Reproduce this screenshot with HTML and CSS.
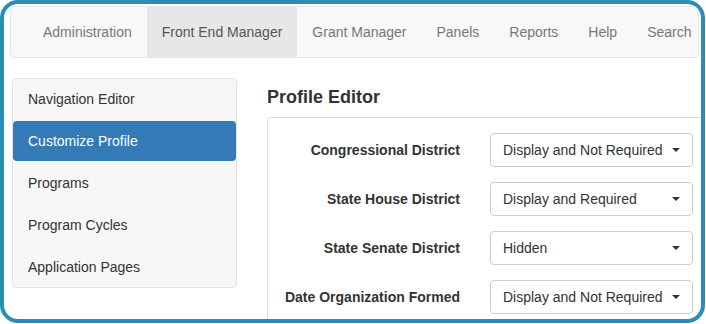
FILE: index.html
```html
<!DOCTYPE html>
<html lang="en">
  <head>
    <meta charset="UTF-8" />
    <meta name="viewport" content="width=device-width, initial-scale=1.0" />
    <title>Profile Editor</title>
    <link rel="stylesheet" href="styles.css">
  </head>
  <body>
    <div class="frame">
      <nav class="navbar">
        <ul class="nav-links">
          <li><a href="#">Administration</a></li>
          <li class="active"><a href="#">Front End Manager</a></li>
          <li><a href="#">Grant Manager</a></li>
          <li><a href="#">Panels</a></li>
          <li><a href="#">Reports</a></li>
          <li><a href="#">Help</a></li>
          <li><a href="#">Search</a></li>
        </ul>
      </nav>

      <div class="layout">
        <aside class="sidebar">
          <ul class="pills">
            <li><a href="#">Navigation Editor</a></li>
            <li class="active"><a href="#">Customize Profile</a></li>
            <li><a href="#">Programs</a></li>
            <li><a href="#">Program Cycles</a></li>
            <li><a href="#">Application Pages</a></li>
          </ul>
        </aside>

        <main class="main">
          <h4 class="page-title">Profile Editor</h4>
          <div class="panel">
            <div class="form-grid">
              <label>Congressional District</label>
              <div class="dropdown"><span>Display and Not Required</span><span class="caret"></span></div>

              <label>State House District</label>
              <div class="dropdown"><span>Display and Required</span><span class="caret"></span></div>

              <label>State Senate District</label>
              <div class="dropdown"><span>Hidden</span><span class="caret"></span></div>

              <label>Date Organization Formed</label>
              <div class="dropdown"><span>Display and Not Required</span><span class="caret"></span></div>
            </div>
          </div>
        </main>
      </div>
    </div>
  </body>
</html>
```

FILE: styles.css
```css
body {
  margin: 0;
  background-color: #fff;
  font-family: "Liberation Sans", Arial, sans-serif;
  font-size: 14px;
  color: #333;
}

.frame {
  width: 705px;
  height: 323px;
  box-sizing: border-box;
  border: 4px solid #2c8cb4;
  border-radius: 18px;
  overflow: hidden;
  padding: 2px 2px 0 6px;
}

.navbar {
  height: 50px;
  background-color: #f8f8f8;
  border: 1px solid #e7e7e7;
  border-radius: 4px;
}

.nav-links {
  display: flex;
  list-style: none;
  margin: 0 0 0 17px;
  padding: 0;
}

.nav-links a {
  display: block;
  padding: 15px;
  line-height: 20px;
  color: #777;
  text-decoration: none;
  white-space: nowrap;
}

.nav-links .active a {
  background-color: #e7e7e7;
  color: #555;
}

.layout {
  display: flex;
  align-items: flex-start;
  gap: 30px;
  margin-top: 20px;
  padding-left: 2px;
}

.sidebar {
  flex: none;
  width: 225px;
  box-sizing: border-box;
  background-color: #f7f7f7;
  border: 1px solid #e3e3e3;
  border-radius: 4px;
}

.pills {
  list-style: none;
  margin: 0;
  padding: 0;
}

.pills li + li {
  margin-top: 2px;
}

.pills a {
  display: block;
  padding: 10px 15px;
  line-height: 20px;
  color: #333;
  text-decoration: none;
  border-radius: 4px;
}

.pills .active a {
  background-color: #337ab7;
  color: #fff;
}

.main {
  flex: none;
  width: 470px;
}

.page-title {
  margin: 9px 0 10px;
  font-size: 18px;
  line-height: 20px;
  font-weight: bold;
}

.panel {
  border: 1px solid #ddd;
  border-radius: 4px;
  padding: 15px;
}

.form-grid {
  display: grid;
  grid-template-columns: 177px 203px;
  column-gap: 30px;
  row-gap: 15px;
  align-items: center;
}

.form-grid label {
  text-align: right;
  font-weight: bold;
  white-space: nowrap;
}

.dropdown {
  display: flex;
  justify-content: space-between;
  align-items: center;
  height: 34px;
  box-sizing: border-box;
  padding: 6px 12px;
  line-height: 20px;
  border: 1px solid #ccc;
  border-radius: 4px;
  white-space: nowrap;
}

.caret {
  width: 0;
  height: 0;
  border-top: 4px solid #333;
  border-left: 4px solid transparent;
  border-right: 4px solid transparent;
}
```
